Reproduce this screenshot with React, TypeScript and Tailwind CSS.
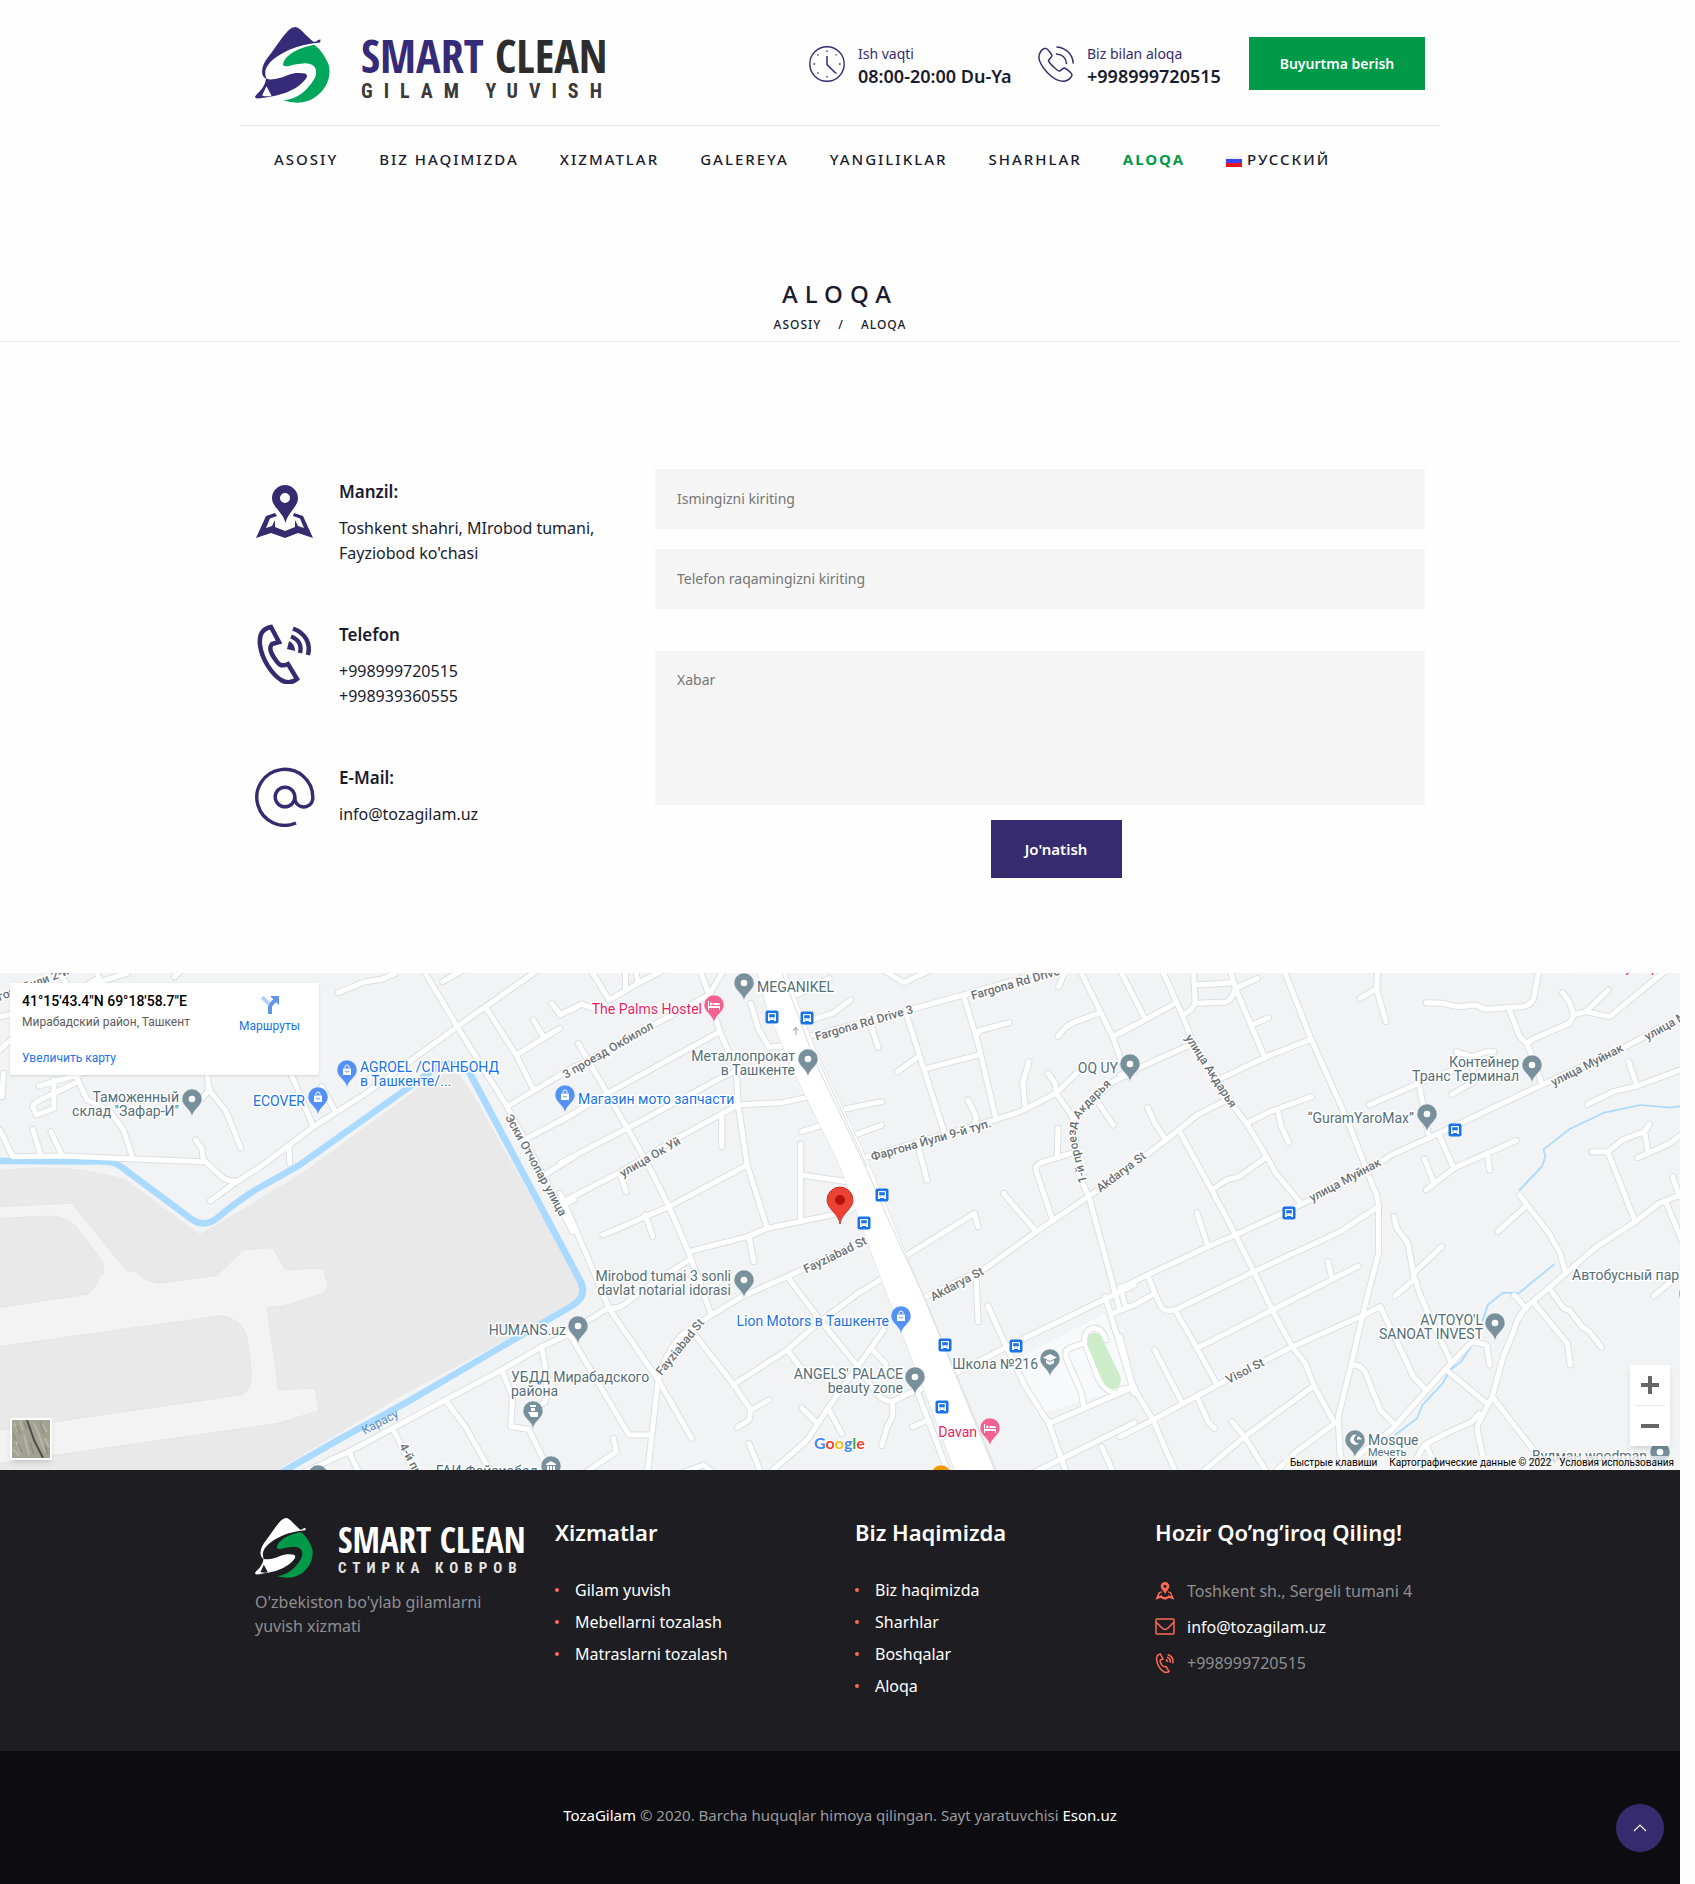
import type { ReactNode } from "react";

const navItems = ["ASOSIY", "BIZ HAQIMIZDA", "XIZMATLAR", "GALEREYA", "YANGILIKLAR", "SHARHLAR"];

function Emblem({ drop, leaf, tip, className }: { drop: string; leaf: string; tip: string; className: string }) {
  return (
    <svg viewBox="63 80 190 230" preserveAspectRatio="none" className={className} aria-hidden="true">
      <path fill={drop} d="M165 80C171 80 178 87 184 94C194 106 203 117 211 125Q221 124 222 119L229 118L228 127Q185 131 150 149C115 168 93 190 89 214Q88 226 92 238Q80 230 81 213C83 188 93 176 105 157C120 132 132 110 148 90Q157 80 165 80Z" />
      <path fill={leaf} d="M213 134C232 150 244 178 250 196Q254 215 249 238C240 275 210 309 170 309Q150 309 135 302C170 300 195 272 212 240C224 215 218 190 190 190Q165 192 150 198Q138 201 134 195C138 165 170 145 213 134Z" />
      <path fill={drop} d="M91 236C105 243 130 234 145 226C160 218 178 218 190 221Q199 226 191 238C175 264 140 284 104 290C88 293 75 297 66 296Q61 293 65 287C75 275 88 262 91 236Z" />
      <path fill={tip} d="M92 259L105 288Q95 292 81 287Z" />
    </svg>
  );
}

function ClockIcon() {
  return (
    <svg viewBox="0 0 36 36" className="size-9 shrink-0" fill="none" stroke="#362b6e" aria-hidden="true">
      <circle cx="18" cy="18" r="17.2" strokeWidth="1.4" />
      <path d="M18 10V18.6L26.5 27" strokeWidth="1.5" />
      <path d="M18 4.5v1.6M18 30v1.6M4.5 18h1.6M30 18h1.6M8.5 8.5l1 1M26.6 26.6l1 1M8.5 27.5l1-1M26.6 9.4l1-1" strokeWidth="1.3" />
    </svg>
  );
}

function CallIcon() {
  return (
    <svg viewBox="0 0 36 36" className="size-9 shrink-0" fill="none" stroke="#362b6e" strokeWidth="1.5" strokeLinecap="round" aria-hidden="true">
      <path d="M6.5 2.5C4 3 .8 7 .9 11.500C1.500 18 8 26 13 30C17 33.500 22 35.500 26.500 35.200C31 34.500 33.500 31 34 29C34 27 28 22.500 26.500 22C25 22 22.500 24.500 22 25C20 26 11 17 10.500 14.500C11 13 14 10.800 14 9.500C13 7 9.500 3 8.500 2.600C7.800 2.300 7 2.400 6.500 2.500Z" />
      <path d="M19 1C28 2 34.500 8 35.200 17M18.500 8C24 8.500 28 12 28.500 17.500" />
    </svg>
  );
}

function PlaceIcon({ className }: { className: string }) {
  return (
    <svg viewBox="0 0 60 60" className={className} aria-hidden="true">
      <path fill="currentColor" fillRule="evenodd" d="M30 3C37 3 43 9 43 16C43 25 33 30 30.500 41C28 30 17 25 17 16C17 9 23 3 30 3ZM30 11A5 5 0 1 0 30 21A5 5 0 1 0 30 11Z" />
      <path fill="currentColor" d="M20 31L22 34L15 36.500L11 46L17 44L20 38L20 45L30 49L40 45L40 38L43 44L49 46L45 36.500L38 34L39 31L48 34L58 56L43 51L30 56L16 51L1 56L11 34Z" />
    </svg>
  );
}

function PhoneIcon({ className }: { className: string }) {
  return (
    <svg viewBox="0 0 60 60" className={className} fill="none" stroke="currentColor" strokeWidth="4.500" aria-hidden="true">
      <path d="M16 3C6 5 4 12 5 21C7 36 17 50 26 56C31 59 37 59 42 55L33 40C26 43 24 41 20 35C15 28 14 23 17 20L24 18Z" />
      <path d="M38 4.500C50 9 56 19 53 31M36 12.500C43 15 47 21 45 29" />
      <path d="M34 17L32 25L40 27Q40 20 34 17Z" fill="currentColor" stroke="none" />
    </svg>
  );
}

function AtIcon({ className }: { className: string }) {
  return (
    <svg viewBox="0 0 60 60" className={className} fill="none" stroke="currentColor" strokeWidth="3.400" aria-hidden="true">
      <circle cx="30" cy="30" r="9.800" />
      <path d="M39.800 30V31A9 9 0 0 0 57.800 31V30A28 28 0 1 0 41 56" />
    </svg>
  );
}

const pathsWest = [
  "M930 98L1005 65L1050 58L1085 42", "M1165 30L1258 200L1395 440L1540 740L1575 815", "M578 723L645 670L730 610L862 500L1000 405L1258 200L1335 140L1480 30",
  "M0 510L35 590L170 588L365 597L565 605L615 655Q630 665 645 662", "M90 508L112 585", "M140 515L170 585", "M365 595L340 510L300 450L240 420L205 340",
  "M538 540L555 565L560 605", "M662 562L620 450L575 390L570 340", "M795 560L797 610", "M862 500L800 340", "M920 450L885 380",
  "M205 370L110 420Q85 435 92 445L100 465L148 445L148 360", "M108 378L290 320", "M5 410L10 340", "M578 388L555 415", "M480 50L500 30", "M0 270L90 180L260 60L275 65L350 40",
  "M265 30L275 65", "M160 30L185 75", "M0 170L90 150", "M1335 140L1420 285L1468 390", "M1420 285L1540 205", "M1467 180L1495 230", "M1517 130L1540 162L1580 145", "M1218 65L1275 30",
  "M1395 440L1580 320", "M1450 535L1580 460", "M1490 650L1580 590", "M1545 740L1580 718", "M820 1545L960 1475L1080 1405L1225 1320L1380 1230L1490 1160L1580 1115",
  "M1080 1405L1145 1545", "M960 1475L990 1545", "M1225 1320L1280 1400L1355 1545", "M1380 1230L1410 1310L1405 1400L1455 1408L1515 1545", "M1490 1160L1505 1250L1500 1325L1475 1345",
];
const pathsMiddle = [
  "M0 700L40 800L135 1045L270 1260L362 1435", "M50 250L130 400L185 505L240 610L300 740L355 880L415 1060", "M0 485L130 400L440 215", "M0 165L60 132L90 145",
  "M0 345L410 105L450 30", "M385 30L410 105", "M85 30L135 120L215 70L285 30", "M215 70L208 30", "M180 90L180 30", "M425 165L440 215L485 330L490 435L515 615L570 805",
  "M0 610L185 505L440 355L490 330", "M0 730L160 640L330 530L490 435L610 428L690 410", "M445 470L445 560", "M665 515L730 492", "M662 552L662 785", "M665 645L790 665",
  "M118 825L300 740L515 615", "M235 765L255 830", "M165 640L182 695", "M355 875L515 830L570 805L660 785L790 755L805 745", "M520 830L533 905",
  "M355 900L240 980L175 1035Q155 1048 130 1045L80 1080L0 1120", "M870 825L625 950L500 1010L410 1070L330 1130Q285 1190 270 1260L240 1545",
  "M625 950L715 1080L820 1220L870 1300Q890 1325 915 1325L960 1300L1025 1275", "M915 1325L915 1370L900 1400L885 1457", "M910 940L820 1000L715 1085L625 1170L475 1275",
  "M365 1115L475 1270L525 1350L575 1320", "M525 1350L520 1380L488 1402", "M625 1170L688 1260", "M890 1110L855 1165L740 1340L680 1440L570 1545", "M855 1165L895 1210L905 1250",
  "M665 1343L708 1390", "M740 1350L775 1420", "M520 1450L555 1545", "M970 1400L1015 1380", "M0 1105L30 1130L190 1425L250 1425", "M60 1545L155 1475L147 1435", "M320 1545L395 1515L430 1545",
  "M525 130L545 205L575 262L640 255", "M640 110L670 95L740 55", "M690 180L750 160L800 120", "M680 230L860 180L1110 105L1350 30", "M890 30L945 68L1010 35", "M955 170L990 290L1055 510",
  "M858 205L875 262", "M1110 105L1150 250L1200 480", "M1235 188L1160 210Q1145 215 1145 235", "M928 335L985 290", "M1010 325L1150 285", "M770 450L885 425", "M800 530L885 495",
  "M825 597L1180 485L1265 455L1365 400L1425 335", "M1290 305L1273 370L1280 445", "M1122 420L1145 470L1140 495", "M985 560L1010 660", "M1342 340L1362 370L1365 400L1410 470L1430 650L1455 710L1540 1050",
  "M1580 335L1520 365L1430 460L1410 490", "M1482 430L1522 495", "M1370 505L1368 585", "M1405 580L1325 608Q1305 615 1310 635L1355 780", "M1220 700L1310 815", "M940 895L1140 760L1150 800",
  "M990 1018L1170 925L1310 815L1460 705L1580 615", "M1145 960L1150 1085", "M1080 1245L1230 1160L1580 975", "M1177 1037L1230 1165L1280 1280L1345 1390L1395 1545", "M1345 1390L1580 1280",
  "M1290 1545L1580 1388", "M1490 1460L1525 1545", "M1500 1010L1580 1300", "M1520 1060L1580 1035", "M1440 1150L1400 1165Q1385 1175 1395 1200L1435 1300L1440 1335",
  "M1502 1140Q1490 1100 1465 1105Q1438 1115 1445 1150L1475 1240Q1490 1290 1530 1300", "M1430 30L1480 140L1520 230L1550 320", "M1372 80L1390 30", "M1370 230Q1390 195 1420 185L1480 160", "M1520 230L1580 195", "M985 1300L1070 1545",
];
const pathsEast = [
  "M0 220L150 130", "M0 30L65 170", "M115 30L170 165L200 250L300 425L345 490L400 590L425 640L490 725", "M200 30L205 125Q200 150 170 165", "M205 130L290 126Q305 120 315 85L375 55", "M300 30L315 85L395 295",
  "M360 195L405 173", "M205 75L310 68", "M0 345L50 325L190 255", "M270 358L400 290L520 238", "M447 30L520 235L620 480L690 680Q705 710 705 745L705 880L665 1050L630 1215L595 1370L600 1480L615 1545",
  "M0 645L125 540L160 510L210 465L300 415", "M75 443L95 490L125 540", "M160 510L250 690L315 825L365 935L415 1050L470 1160L505 1210L530 1280L585 1390", "M250 690L290 660L325 650L395 595",
  "M345 490L410 455L522 410", "M432 460L440 500L460 547", "M0 985L75 945L240 860L315 825L500 730L700 615L740 585L850 530L1140 380L1370 265L1540 165", "M210 758L240 860",
  "M75 945L95 1000L40 1035L0 1050", "M95 1000L112 1040Q118 1055 150 1050L365 935L600 815L705 740", "M0 980L15 1040", "M150 1050L210 1165L265 1275", "M210 1165L415 1050L650 918", "M567 905L578 955",
  "M0 1430L90 1380L265 1275L470 1160L665 1065L710 1040L800 1250L835 1290", "M95 1170L170 1330", "M0 1130L35 1280L90 1380L155 1545", "M0 1290L35 1280", "M210 1310L240 1385L258 1405",
  "M215 1545L340 1430L525 1280", "M305 1385L340 1430L405 1545", "M415 1545L480 1475L580 1395", "M747 770L755 805L785 850L800 940L820 1010L900 1200", "M877 860L800 940L800 960L750 1008",
  "M635 1215Q660 1215 670 1240L710 1350L750 1395", "M645 1490L740 1410L890 1225L960 1145L1000 1155L1008 1215", "M890 1230L1000 1330", "M1215 940L1110 1040Q1080 1075 1075 1110L1045 1190L1015 1310L980 1385Q970 1400 978 1430L1000 1545",
  "M1540 700L1470 730L1405 785L1300 860L1215 940L1200 880L1170 820L1110 735L1090 705", "M1110 735L1030 815", "M1075 1005L1108 1045", "M1130 1030L1220 1150L1228 1215", "M1170 985L1210 1045L1225 1050L1260 1100L1280 1115L1313 1162",
  "M1015 1310L1180 1545", "M980 1360L960 1385L880 1425L830 1455L795 1520", "M835 1455L860 1520", "M1405 785L1330 575L1288 575", "M1330 575L1370 540L1430 515L1443 493", "M1430 515L1440 575", "M1412 593L1500 550L1540 515",
  "M1507 650L1525 710", "M1490 730L1535 850", "M1455 1008L1540 930", "M1275 433L1345 395L1410 378L1540 325", "M1387 305L1410 378", "M835 128L880 130L920 140L970 135L995 148L1095 140Q1128 135 1130 105L1142 30",
  "M1060 145L1090 230L1110 250L1150 370", "M1110 250L1130 235L1225 190L1238 165L1225 125L1207 98", "M1235 165L1270 155L1332 90", "M1270 155L1335 170L1490 30", "M702 30L700 90L725 185", "M655 115L700 85",
  "M680 435L815 370L840 520", "M815 370L935 320", "M905 403L965 365L960 290L917 275", "M960 290L1000 275L1020 275", "M870 525L910 625L835 690", "M857 670L830 597", "M910 625L980 590L1080 542", "M1003 590L1008 630",
];

const tiles = [
  { transform: "translate(0 960) scale(0.36352 0.33333)", paths: pathsWest },
  { transform: "translate(560 960) scale(0.36352 0.33333)", paths: pathsMiddle },
  { transform: "translate(1120 960) scale(0.36672 0.33333)", paths: pathsEast },
];

function Streets({ color, width }: { color: string; width: number }) {
  return (
    <g fill="none" stroke={color} strokeWidth={width} strokeLinecap="round" strokeLinejoin="round">
      {tiles.map((tile) => (
        <g key={tile.transform} transform={tile.transform}>
          {tile.paths.map((d) => (
            <path key={d} d={d} vectorEffect="non-scaling-stroke" />
          ))}
        </g>
      ))}
    </g>
  );
}

const slate = "#77909b";
const pink = "#f06292";
const blue = "#5491f5";

const glyphs: Record<string, ReactNode> = {
  dot: <circle r="3.300" fill="#fff" />,
  shop: (
    <g>
      <path d="M-4 -1.500H4V5H-4Z" fill="#fff" />
      <path d="M-2 -2V-3Q-2 -5 0 -5Q2 -5 2 -3V-2" fill="none" stroke="#fff" />
      <path d="M-2 1Q0 3.500 2 1" fill="none" stroke={blue} />
    </g>
  ),
  bed: (
    <g fill="#fff">
      <path d="M-6 -4H-5V1H6V5H5V3H-5V5H-6Z" />
      <path d="M-0.500 -2H4Q6 -2 6 0H-0.500Z" />
      <circle cx="-2.700" cy="-1" r="1.400" />
    </g>
  ),
  school: <path d="M0 -5L7 -1.500L0 2L-7 -1.500ZM-4 1V4L0 6L4 4V1L0 3Z" fill="#fff" />,
  moon: <path d="M2 -5A5 5 0 1 0 4 3A4 4 0 1 1 2 -5ZM4 -4L5 -2H7L5 0L4 -1L2 0V-2Z" fill="#fff" />,
  museum: <path d="M-5 -2L0 -5L5 -2V-1H-5ZM-4 0H-2V4H-4ZM-1 0H1V4H-1ZM2 0H4V4H2Z" fill="#fff" />,
  police: <path d="M-3 -6H3V-4H-3ZM-2 -3H2V0H-2ZM-5 1H5V6H-2Z" fill="#fff" />,
};

function Pin({ x, tip, color = slate, glyph = "dot" }: { x: number; tip: number; color?: string; glyph?: string }) {
  return (
    <g transform={`translate(${x} ${tip - 18})`}>
      <path d="M0 18C-1 10 -10 7 -10 0A10 10 0 1 1 10 0C10 7 1 10 0 18Z" fill={color} stroke="#fff" strokeOpacity=".7" strokeWidth=".6" />
      {glyphs[glyph]}
    </g>
  );
}

type Label = { x: number; y: number; lines: string[]; color?: string; anchor?: "end" | "start" };
const places: Label[] = [
  { x: 179, y: 1102, lines: ["Таможенный", "склад \"Зафар-И\""], anchor: "end" },
  { x: 305, y: 1106, lines: ["ECOVER"], color: "#1a73e8", anchor: "end" },
  { x: 360, y: 1072, lines: ["AGROEL /СПАНБОНД", "в Ташкенте/..."], color: "#1a73e8" },
  { x: 578, y: 1104, lines: ["Магазин мото запчасти"], color: "#1a73e8" },
  { x: 702, y: 1014, lines: ["The Palms Hostel"], color: "#e91e63", anchor: "end" },
  { x: 757, y: 992, lines: ["MEGANIKEL"] },
  { x: 795, y: 1061, lines: ["Металлопрокат", "в Ташкенте"], anchor: "end" },
  { x: 1118, y: 1073, lines: ["OQ UY"], anchor: "end" },
  { x: 1519, y: 1067, lines: ["Контейнер", "Транс Терминал"], anchor: "end" },
  { x: 1414, y: 1123, lines: ["“GuramYaroMax”"], anchor: "end" },
  { x: 731, y: 1281, lines: ["Mirobod tumai 3 sonli", "davlat notarial idorasi"], anchor: "end" },
  { x: 889, y: 1326, lines: ["Lion Motors в Ташкенте"], color: "#1a73e8", anchor: "end" },
  { x: 566, y: 1335, lines: ["HUMANS.uz"], anchor: "end" },
  { x: 511, y: 1382, lines: ["УБДД Мирабадского", "района"] },
  { x: 903, y: 1379, lines: ["ANGELS' PALACE", "beauty zone"], anchor: "end" },
  { x: 1038, y: 1369, lines: ["Школа №216"], anchor: "end" },
  { x: 977, y: 1437, lines: ["Davan"], color: "#e91e63", anchor: "end" },
  { x: 1483, y: 1325, lines: ["AVTOYO'L", "SANOAT INVEST"], anchor: "end" },
  { x: 1572, y: 1280, lines: ["Автобусный парк"] },
  { x: 1368, y: 1445, lines: ["Mosque"] },
  { x: 1647, y: 1461, lines: ["Вудман woodman"], anchor: "end" },
  { x: 538, y: 1476, lines: ["ГАИ Файзиабад"], anchor: "end" },
];

const streets: [string, number, number, number][] = [
  ["ргона йули 2-й", 30, 985, -21],
  ["3 проезд Окбилол", 608, 1050, -30],
  ["улица Ок Уй", 650, 1157, -30],
  ["Эски Отчопар улица", 536, 1165, 61],
  ["Fargona Rd Drive 3", 864, 1023, -16],
  ["Fargona Rd Drive 3", 1020, 982, -16],
  ["Фаргона Йули 9-й туп.", 931, 1140, -16],
  ["Fayziabad St", 835, 1255, -26],
  ["Fayziabad St", 680, 1347, -51],
  ["Akdarya St", 957, 1284, -28],
  ["Akdarya St", 1121, 1172, -37],
  ["улица Акдарья", 1211, 1071, 57],
  ["улица Муйнак", 1345, 1180, -28],
  ["улица Муйнак", 1587, 1065, -27],
  ["улица Муйнак", 1680, 1018, -29],
  ["Visol St", 1245, 1371, -27],
  ["4-й проезд", 417, 1471, 62],
];

const stops: [number, number][] = [[772, 1017], [807, 1018], [882, 1195], [864, 1223], [945, 1345], [1016, 1346], [942, 1407], [1455, 1130], [1289, 1213]];

function CityMap() {
  return (
    <svg viewBox="0 973 1680 497" preserveAspectRatio="xMidYMid slice" className="block h-[497px] w-full bg-[#f1f3f4] font-[Roboto,sans-serif]" role="img" aria-label="Xarita">
      <rect y="973" width="1680" height="497" fill="#f1f3f4" />
      <g transform={tiles[0].transform}>
        <path fill="#e9e9e9" d="M0 630Q180 605 340 655L550 822L640 765L830 640L1200 345L1260 340L1300 400L1590 960Q1620 1010 1580 1030L1100 1310L740 1545L0 1545Z" />
        <path fill="#f3f3f3" stroke="#e2e2e4" strokeWidth="2" d="M-5 740L198 730L350 935L370 932Q410 968 440 970L597 946L668 870L750 863L785 928L890 926L902 980L892 998L800 1032L735 1045L766 1288L867 1286L877 1352L765 1390L-5 1510L-5 1410L665 1304Q692 1290 692 1240L680 1130Q665 1075 607 1067L-5 1160L-5 1043L240 1003Q270 980 272 948L285 942L283 905L210 800Q180 768 140 768L-5 775Z" />
      </g>
      <g transform={tiles[1].transform}>
        <path fill="#f8f9fb" d="M1250 1200L1500 1060L1568 1280L1310 1365Z" />
      </g>
      <Streets color="#dcdfe3" width={7} />
      <g fill="none" stroke="#aadaff" strokeLinejoin="round">
        <g transform={tiles[0].transform} strokeWidth="19">
          <path d="M0 603L290 605Q320 606 345 630L520 772Q560 808 600 772Q650 725 710 685L820 618L1185 335Q1235 285 1290 335L1595 960Q1620 1010 1570 1040L1380 1160L1130 1320L930 1440L770 1540" />
        </g>
        <g transform={tiles[2].transform} strokeWidth="5">
          <path d="M1540 437L1500 443L1420 435L1320 458L1225 508L1155 568L1160 590L1150 620L1088 692" />
          <path d="M1185 912L1087 1000L1045 998L1003 1035L988 1085M960 1155L930 1205L900 1230L880 1270L825 1335L810 1375L750 1425M700 1470L660 1530" />
        </g>
      </g>
      <Streets color="#ffffff" width={5} />
      <g transform={tiles[1].transform}>
        <path fill="#fff" stroke="#dcdfe3" strokeWidth="2" d="M540 30L570 150L640 330L770 620L880 950L990 1260L1090 1545L1200 1545L1000 1010L850 610L700 260L620 30Z" />
        <path fill="none" stroke="#dcdfe3" strokeWidth="3" d="M607 30L660 180L700 300L840 620L900 770L1005 1020L1205 1545M715 310L845 620" />
        <path fill="none" stroke="#b5bcc2" strokeWidth="4" d="M650 225L648 205M641 212L648 202L656 212" />
        <path fill="#cdecca" d="M1450 1155Q1448 1122 1470 1118Q1485 1118 1492 1138L1542 1250Q1546 1285 1520 1287Q1500 1284 1492 1262Z" />
      </g>

      {stops.map(([x, y]) => (
        <g key={`${x}-${y}`} transform={`translate(${x} ${y})`}>
          <rect x="-6.500" y="-6.500" width="13" height="13" rx="2" fill="#1a73e8" />
          <path d="M-3 -4H3Q4 -4 4 -3V4H2V3H-2V4H-4V-3Q-4 -4 -3 -4Z" fill="#fff" />
          <path d="M-2.500 -2.500H2.500V0H-2.500ZM-2.500 1.200H-1.300M1.300 1.200H2.500" fill="#1a73e8" stroke="#1a73e8" strokeWidth=".6" />
        </g>
      ))}

      <g fontSize="12" fontWeight="500" fill="#6b7075" textAnchor="middle" stroke="#fff" strokeWidth="3" paintOrder="stroke" strokeLinejoin="round">
        {streets.map(([name, x, y, angle]) => (
          <text key={`${name}-${x}`} transform={`translate(${x} ${y}) rotate(${angle})`} dy="4">
            {name}
          </text>
        ))}
        <path id="akdarya-lane" d="M1087 1182C1080 1150 1070 1130 1080 1118C1090 1104 1102 1094 1122 1074" fill="none" stroke="none" />
        <text textAnchor="start">
          <textPath href="#akdarya-lane">1-й проезд Акдарья</textPath>
        </text>
        <text transform="translate(380 1422) rotate(-28)" dy="4" fill="#5b8fc7" stroke="none" fontWeight="400">
          Карасу
        </text>
      </g>

      <Pin x={192} tip={1117} />
      <Pin x={744} tip={1001} />
      <Pin x={808} tip={1077} />
      <Pin x={1130} tip={1082} />
      <Pin x={744} tip={1298} />
      <Pin x={578} tip={1344} />
      <Pin x={915} tip={1395} />
      <Pin x={1427} tip={1132} />
      <Pin x={1532} tip={1083} />
      <Pin x={1495} tip={1341} />
      <Pin x={1660} tip={1470} />
      <Pin x={1689} tip={1312} />
      <Pin x={318} tip={1493} />
      <Pin x={551} tip={1484} glyph="museum" />
      <Pin x={533} tip={1429} glyph="police" />
      <Pin x={1050} tip={1377} glyph="school" />
      <Pin x={1355} tip={1458} glyph="moon" />
      <Pin x={941} tip={1493} color="#f29900" />
      <Pin x={347} tip={1088} color={blue} glyph="shop" />
      <Pin x={318} tip={1115} color={blue} glyph="shop" />
      <Pin x={565} tip={1113} color={blue} glyph="shop" />
      <Pin x={901} tip={1334} color={blue} glyph="shop" />
      <Pin x={714} tip={1023} color={pink} glyph="bed" />
      <Pin x={990} tip={1446} color={pink} glyph="bed" />

      <g fontSize="14" stroke="#fff" strokeWidth="3" paintOrder="stroke" strokeLinejoin="round">
        {places.map((place) => (
          <text key={place.lines[0]} y={place.y} fill={place.color ?? "#546e7a"} textAnchor={place.anchor ?? "start"}>
            {place.lines.map((line, i) => (
              <tspan key={line} x={place.x} dy={i * 14}>
                {line}
              </tspan>
            ))}
          </text>
        ))}
        <text x="1368" y="1456" fontSize="11" fill="#546e7a">Мечеть</text>
        <text x="1570" y="972" fill="#e91e63">Хаммаму парк</text>
      </g>

      <g transform="translate(840 1200)">
        <path d="M0 24C-1 14 -13 9 -13 0A13 13 0 1 1 13 0C13 9 1 14 0 24Z" fill="#ea4335" stroke="#c5221f" strokeWidth=".8" />
        <circle r="5" fill="#b31412" />
      </g>

      <text x="814" y="1449" fontSize="16" fontWeight="700" fontFamily="Lato, sans-serif" stroke="#fff" strokeWidth="2" paintOrder="stroke">
        <tspan fill="#4285f4">G</tspan>
        <tspan fill="#ea4335">o</tspan>
        <tspan fill="#fbbc04">o</tspan>
        <tspan fill="#4285f4">g</tspan>
        <tspan fill="#34a853">l</tspan>
        <tspan fill="#ea4335">e</tspan>
      </text>
    </svg>
  );
}

function ContactRow({ icon, title, children }: { icon: ReactNode; title: string; children: ReactNode }) {
  return (
    <div className="flex min-h-[143px] gap-6 text-[#1a1b2e]">
      <div className="w-[60px] shrink-0 text-[#362b6e]">{icon}</div>
      <div>
        <h3 className="mb-[10px] text-[17px] leading-7 font-semibold">{title}</h3>
        <div className="text-base leading-[25px]">{children}</div>
      </div>
    </div>
  );
}

function FooterList({ title, items }: { title: string; items: string[] }) {
  return (
    <div className="w-[300px] pr-[30px]">
      <h2 className="mb-7 text-[22px] leading-7 font-semibold">{title}</h2>
      <ul>
        {items.map((item) => (
          <li key={item} className="flex items-center gap-4 text-base leading-8">
            <span className="size-1 rounded-full bg-[#ff6a55]" />
            <a href="#">{item}</a>
          </li>
        ))}
      </ul>
    </div>
  );
}

export default function App() {
  return (
    <div className="bg-[#fefefe] pr-[15px] font-['Noto_Sans',sans-serif] text-[#1a1b2e]">
      <header className="mx-auto max-w-[1200px]">
        <div className="flex h-[126px] items-center justify-between border-b border-[#e3e3e5] px-[15px] pt-[2px]">
          <a href="#" className="flex items-center gap-[31px] pt-[2px]" aria-label="Smart Clean">
            <Emblem drop="#362b78" leaf="#00a65a" tip="#fff" className="h-[76px] w-[75px] shrink-0" />
            <span className="flex flex-col gap-1 pt-2 font-bold whitespace-nowrap">
              <span className="font-['Open_Sans_Condensed',sans-serif] text-[46px] leading-10 text-[#2d2d2d]">
                <span className="text-[#362b78]">SMART</span> CLEAN
              </span>
              <span className="font-['Roboto_Condensed',sans-serif] text-xl leading-6 tracking-[11px] text-[#3a3a3a]">GILAM YUVISH</span>
            </span>
          </a>
          <div className="flex items-center gap-[21px]">
            <div className="flex items-center gap-[13px]">
              <ClockIcon />
              <div className="w-[159px] pt-1">
                <p className="text-sm leading-5 text-[#362b6e]">Ish vaqti</p>
                <p className="text-lg leading-6 font-semibold">08:00-20:00 Du-Ya</p>
              </div>
            </div>
            <div className="flex items-center gap-[13px]">
              <CallIcon />
              <div className="w-[141px] pt-1">
                <p className="text-sm leading-5 text-[#362b6e]">Biz bilan aloqa</p>
                <p className="text-lg leading-6 font-semibold">+998999720515</p>
              </div>
            </div>
            <button className="h-[53px] w-44 bg-[#009a49] text-sm font-semibold text-white">Buyurtma berish</button>
          </div>
        </div>
        <nav className="flex h-[66px] items-center gap-[41px] pl-[34px] text-[15px] font-medium tracking-[2px] whitespace-nowrap">
          {navItems.map((item) => (
            <a key={item} href="#">
              {item}
            </a>
          ))}
          <a href="#" className="font-bold text-[#009a49]">
            ALOQA
          </a>
          <a href="#" className="flex items-center gap-[5px]">
            <svg viewBox="0 0 16 11" className="mt-1 h-[11px] w-4" aria-hidden="true">
              <rect width="16" height="4" fill="#f1f1f5" />
              <rect y="3" width="16" height="4" fill="#3a44f0" />
              <rect y="7" width="16" height="4" fill="#e8141c" />
            </svg>
            РУССКИЙ
          </a>
        </nav>
      </header>

      <section className="border-b border-[#ebebeb] pt-[84px] pb-1 text-center">
        <h1 className="text-2xl leading-9 font-medium tracking-[7px]">ALOQA</h1>
        <p className="flex justify-center gap-[17px] text-xs leading-[25px] font-medium tracking-[1px]">
          <a href="#">ASOSIY</a>
          <span>/</span>
          <span>ALOQA</span>
        </p>
      </section>

      <main className="mx-auto flex max-w-[1200px] px-[15px] pt-[127px] pb-[66px]">
        <div className="w-[400px] pt-[9px]">
          <ContactRow title="Manzil:" icon={<PlaceIcon className="mt-1 size-[60px]" />}>
            Toshkent shahri, MIrobod tumani,
            <br />
            Fayziobod ko'chasi
          </ContactRow>
          <ContactRow title="Telefon" icon={<PhoneIcon className="mt-[3px] size-[60px]" />}>
            +998999720515
            <br />
            +998939360555
          </ContactRow>
          <ContactRow title="E-Mail:" icon={<AtIcon className="mt-[3px] size-[60px]" />}>
            <a href="#">info@tozagilam.uz</a>
          </ContactRow>
        </div>
        <form className="flex flex-1 flex-col items-center">
          <input aria-label="Ism" placeholder="Ismingizni kiriting" className="mb-5 h-[60px] w-full bg-[#f5f5f5] px-[22px] pb-[2px] text-sm placeholder:text-[#757575]" />
          <input aria-label="Telefon" placeholder="Telefon raqamingizni kiriting" className="mb-[42px] h-[60px] w-full bg-[#f5f5f5] px-[22px] pb-[2px] text-sm placeholder:text-[#757575]" />
          <textarea aria-label="Xabar" placeholder="Xabar" className="mb-[15px] h-[154px] w-full resize-none bg-[#f5f5f5] px-[22px] py-[19px] text-sm placeholder:text-[#757575]" />
          <button type="button" className="ml-8 h-[58px] w-[131px] bg-[#362b6e] text-[15px] font-semibold text-white">
            Jo'natish
          </button>
        </form>
      </main>

      <section className="relative overflow-hidden font-[Roboto,sans-serif]">
        <CityMap />
        <div className="absolute top-[10px] left-[10px] flex h-[92px] w-[309px] justify-between rounded-xs bg-white py-[9px] pr-[19px] pl-3 shadow-sm">
          <div className="flex flex-col">
            <p className="text-sm leading-[18px] font-medium text-black">41°15'43.4"N 69°18'58.7"E</p>
            <p className="mt-1 text-xs leading-4 text-[#5b5b5b]">Мирабадский район, Ташкент</p>
            <a href="#" className="mt-5 text-xs leading-4 text-[#1a73e8]">
              Увеличить карту
            </a>
          </div>
          <a href="#" className="flex flex-col items-center gap-1 pt-1 text-xs leading-4 text-[#1a73e8]">
            <svg viewBox="0 0 18 18" className="size-[18px]" fill="none" aria-hidden="true">
              <path d="M1 1L8 8" stroke="#b5d0f7" strokeWidth="4" />
              <path d="M9 18V11Q9 9 14 4.500" stroke="#5e97e8" strokeWidth="4" />
              <path d="M9 0H18V9Z" fill="#5e97e8" />
            </svg>
            Маршруты
          </a>
        </div>
        <button aria-label="Sputnik" className="absolute bottom-[10px] left-[10px] size-[42px] rounded-xs border-2 border-white bg-white shadow-md">
          <svg viewBox="0 0 38 38" className="size-full" aria-hidden="true">
            <rect width="38" height="38" fill="#a3a192" />
            <path d="M2 3l4 9M8 0l3 11M30 4l5 8M3 20l6 14M12 15l5 20M26 12l7 20M22 3l10 26M1 29l6 7M33 18l4 9" stroke="#b8b5a8" strokeWidth="2" />
            <path d="M5 6l3 8M12 2l3 7M28 2l4 12M6 24l4 9M18 22l4 13M33 25l3 9M1 13l3 8" stroke="#8f9585" strokeWidth="2" />
            <path d="M15 0L22 20L31 38" stroke="#4b4f4d" strokeWidth="2" fill="none" />
          </svg>
        </button>
        <div className="absolute right-[10px] bottom-6 flex h-[81px] w-10 flex-col items-center rounded-xs bg-white shadow-md">
          <button aria-label="Kattalashtirish" className="flex flex-1 items-center">
            <svg viewBox="0 0 18 18" className="size-[18px]" aria-hidden="true">
              <path d="M0 9H18M9 0V18" stroke="#666" strokeWidth="4" />
            </svg>
          </button>
          <span className="h-px w-[30px] bg-[#e6e6e6]" />
          <button aria-label="Kichraytirish" className="flex flex-1 items-center">
            <svg viewBox="0 0 18 18" className="size-[18px]" aria-hidden="true">
              <path d="M0 9H18" stroke="#666" strokeWidth="4" />
            </svg>
          </button>
        </div>
        <div className="absolute right-0 bottom-0 flex gap-2 bg-[#f5f5f5]/75 px-[6px] text-[10px] leading-[14px] text-black">
          <button className="pr-1">Быстрые клавиши</button>
          <span>Картографические данные © 2022</span>
          <a href="#">Условия использования</a>
        </div>
      </section>

      <footer className="text-white">
        <div className="bg-[#1e1e22]">
          <div className="mx-auto flex min-h-[281px] max-w-[1200px] px-[15px] pt-12">
            <div className="w-[300px] pr-[30px]">
              <a href="#" className="flex items-center gap-[25px]" aria-label="Smart Clean">
                <Emblem drop="#fff" leaf="#009a49" tip="#1e1e22" className="h-[60px] w-[58px] shrink-0" />
                <span className="flex flex-col pt-1 font-bold whitespace-nowrap">
                  <span className="font-['Open_Sans_Condensed',sans-serif] text-[35px] leading-9">SMART CLEAN</span>
                  <span className="font-['Roboto_Condensed',sans-serif] text-[15px] leading-5 tracking-[6px] text-[#e3e3e3]">СТИРКА КОВРОВ</span>
                </span>
              </a>
              <p className="mt-3 text-base leading-6 text-[#8f8f91]">
                O'zbekiston bo'ylab gilamlarni
                <br />
                yuvish xizmati
              </p>
            </div>
            <FooterList title="Xizmatlar" items={["Gilam yuvish", "Mebellarni tozalash", "Matraslarni tozalash"]} />
            <FooterList title="Biz Haqimizda" items={["Biz haqimizda", "Sharhlar", "Boshqalar", "Aloqa"]} />
            <div className="whitespace-nowrap">
              <h2 className="mb-[27px] text-[22px] leading-7 font-semibold">Hozir Qo’ng’iroq Qiling!</h2>
              <ul className="text-base leading-9 text-[#8f8f91]">
                <li className="flex items-center gap-3">
                  <PlaceIcon className="size-5 text-[#ff6a55]" />
                  Toshkent sh., Sergeli tumani 4
                </li>
                <li className="flex items-center gap-3 text-white">
                  <svg viewBox="0 0 20 20" className="size-5" fill="none" stroke="#ff6a55" strokeWidth="1.500" aria-hidden="true">
                    <rect x="1" y="2" width="18" height="15" rx="1" />
                    <path d="M1 5L7 11Q10 14 13 11L19 5" />
                  </svg>
                  <a href="#">info@tozagilam.uz</a>
                </li>
                <li className="flex items-center gap-3">
                  <PhoneIcon className="size-5 text-[#ff6a55]" />
                  +998999720515
                </li>
              </ul>
            </div>
          </div>
        </div>
        <div className="relative flex h-[133px] items-center justify-center bg-[#0d0d11] pb-1 text-[15px] text-[#9b9b9d]">
          <p>
            <a href="#" className="text-white">TozaGilam</a> © 2020. Barcha huquqlar himoya qilingan. Sayt yaratuvchisi{" "}
            <a href="#" className="text-white">Eson.uz</a>
          </p>
          <button aria-label="Yuqoriga" className="absolute right-4 bottom-8 flex size-12 items-center justify-center rounded-full bg-[#362b6e]">
            <svg viewBox="0 0 14 8" className="h-2 w-3.5" fill="none" stroke="#fff" strokeWidth="1.200" aria-hidden="true">
              <path d="M1 7L7 1L13 7" />
            </svg>
          </button>
        </div>
      </footer>
    </div>
  );
}
